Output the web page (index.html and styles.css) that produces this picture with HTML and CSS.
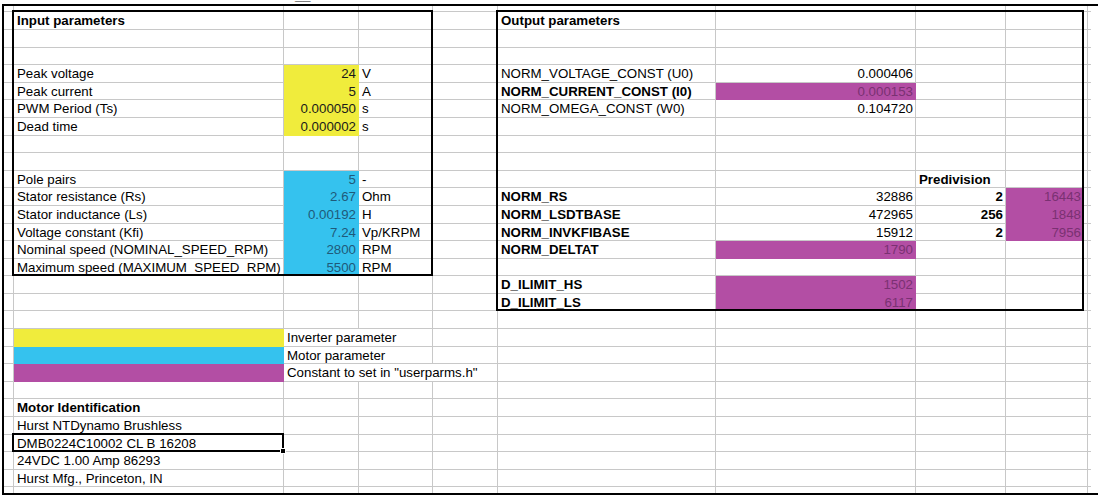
FILE: index.html
```html
<!DOCTYPE html>
<html>
<head>
<meta charset="utf-8">
<title>Motor parameters</title>
<link rel="stylesheet" href="styles.css">
</head>
<body>
<div class="title"><span>__</span></div>
<div class="frame">
  <div class="sheet">
    <i class="row r0"></i><i class="row r1"></i><i class="row r2"></i><i class="row r3"></i>
    <i class="row r4"></i><i class="row r5"></i><i class="row r6"></i><i class="row r7"></i>
    <i class="row r8"></i><i class="row r9"></i><i class="row r10"></i><i class="row r11"></i>
    <i class="row r12"></i><i class="row r13"></i><i class="row r14"></i><i class="row r15"></i>
    <i class="row r16"></i><i class="row r17"></i><i class="row r18"></i><i class="row r19"></i>
    <i class="row r20"></i><i class="row r21"></i><i class="row r22"></i><i class="row r23"></i>
    <i class="row r24"></i><i class="row r25"></i><i class="row r26"></i><i class="row r27"></i>

    <!-- Input parameters -->
    <div class="cell b cB r1">Input parameters</div>

    <div class="cell cB r4">Peak voltage</div>
    <div class="cell num yel cC r4">24</div>
    <div class="cell cD r4">V</div>
    <div class="cell cB r5">Peak current</div>
    <div class="cell num yel cC r5">5</div>
    <div class="cell cD r5">A</div>
    <div class="cell cB r6">PWM Period (Ts)</div>
    <div class="cell num yel cC r6">0.000050</div>
    <div class="cell cD r6">s</div>
    <div class="cell cB r7">Dead time</div>
    <div class="cell num yel cC r7">0.000002</div>
    <div class="cell cD r7">s</div>

    <div class="cell cB r10">Pole pairs</div>
    <div class="cell num cya cC r10">5</div>
    <div class="cell cD r10">-</div>
    <div class="cell cB r11">Stator resistance (Rs)</div>
    <div class="cell num cya cC r11">2.67</div>
    <div class="cell cD r11">Ohm</div>
    <div class="cell cB r12">Stator inductance (Ls)</div>
    <div class="cell num cya cC r12">0.00192</div>
    <div class="cell cD r12">H</div>
    <div class="cell cB r13">Voltage constant (Kfi)</div>
    <div class="cell num cya cC r13">7.24</div>
    <div class="cell cD r13">Vp/KRPM</div>
    <div class="cell cB r14">Nominal speed (NOMINAL_SPEED_RPM)</div>
    <div class="cell num cya cC r14">2800</div>
    <div class="cell cD r14">RPM</div>
    <div class="cell cB r15">Maximum speed (MAXIMUM_SPEED_RPM)</div>
    <div class="cell num cya cC r15">5500</div>
    <div class="cell cD r15">RPM</div>

    <!-- Output parameters -->
    <div class="cell b cF r1">Output parameters</div>

    <div class="cell cF r4">NORM_VOLTAGE_CONST (U0)</div>
    <div class="cell num cG r4">0.000406</div>
    <div class="cell b cF r5">NORM_CURRENT_CONST (I0)</div>
    <div class="cell num mag cG r5">0.000153</div>
    <div class="cell cF r6">NORM_OMEGA_CONST (W0)</div>
    <div class="cell num cG r6">0.104720</div>

    <div class="cell b cH r10">Predivision</div>

    <div class="cell b cF r11">NORM_RS</div>
    <div class="cell num cG r11">32886</div>
    <div class="cell num b cH r11">2</div>
    <div class="cell num mag cI r11">16443</div>
    <div class="cell b cF r12">NORM_LSDTBASE</div>
    <div class="cell num cG r12">472965</div>
    <div class="cell num b cH r12">256</div>
    <div class="cell num mag cI r12">1848</div>
    <div class="cell b cF r13">NORM_INVKFIBASE</div>
    <div class="cell num cG r13">15912</div>
    <div class="cell num b cH r13">2</div>
    <div class="cell num mag cI r13">7956</div>
    <div class="cell b cF r14">NORM_DELTAT</div>
    <div class="cell num mag cG r14">1790</div>

    <div class="cell b cF r16">D_ILIMIT_HS</div>
    <div class="cell num mag cG r16">1502</div>
    <div class="cell b cF r17">D_ILIMIT_LS</div>
    <div class="cell num mag cG r17">6117</div>

    <!-- Legend -->
    <div class="cell yel cB r19"></div>
    <div class="cell ovf cCD r19">Inverter parameter</div>
    <div class="cell cya cB r20"></div>
    <div class="cell ovf cCD r20">Motor parameter</div>
    <div class="cell mag cB r21"></div>
    <div class="cell ovf cCE r21">Constant to set in "userparms.h"</div>

    <!-- Motor identification -->
    <div class="cell b cB r23">Motor Identification</div>
    <div class="cell cB r24">Hurst NTDynamo Brushless</div>
    <div class="cell cB r25">DMB0224C10002 CL B 16208</div>
    <div class="cell cB r26">24VDC 1.00 Amp 86293</div>
    <div class="cell cB r27">Hurst Mfg., Princeton, IN</div>

    <!-- Borders and selection -->
    <div class="box box-in"></div>
    <div class="box box-out"></div>
    <div class="sel"><i class="handle"></i></div>
  </div>
</div>
</body>
</html>
```

FILE: styles.css
```css
* { box-sizing: border-box; }

html, body {
  margin: 0;
  padding: 0;
  background: #fff;
}

body {
  width: 1098px;
  height: 497px;
  overflow: hidden;
  font-family: "Liberation Sans", Arial, sans-serif;
  font-size: 13.3px;
  color: #000;
}

.title {
  height: 4px;
  overflow: hidden;
}

.title span {
  display: block;
  margin: -12px 0 0 295px;
  font: bold 14px/14px "Liberation Sans", Arial, sans-serif;
  color: #111;
}

.frame {
  margin-left: 2px;
  width: 1096px;
  height: 491px;
  border: 2px solid #000;
  border-right: 0;
  overflow: hidden;
}

.sheet {
  display: grid;
  grid-template-columns: 10px 270px 75px 74px 65px 218px 200px 90px 78px 7px 1fr;
  grid-template-rows: 6.4px repeat(27, 17.6px) 1fr;
  height: 487px;
  background:
    linear-gradient(#c8c8c8, #c8c8c8) 9px 0 / 1px 100% no-repeat,
    linear-gradient(#c8c8c8, #c8c8c8) 279px 0 / 1px 100% no-repeat,
    linear-gradient(#c8c8c8, #c8c8c8) 354px 0 / 1px 100% no-repeat,
    linear-gradient(#c8c8c8, #c8c8c8) 428px 0 / 1px 100% no-repeat,
    linear-gradient(#c8c8c8, #c8c8c8) 493px 0 / 1px 100% no-repeat,
    linear-gradient(#c8c8c8, #c8c8c8) 711px 0 / 1px 100% no-repeat,
    linear-gradient(#c8c8c8, #c8c8c8) 911px 0 / 1px 100% no-repeat,
    linear-gradient(#c8c8c8, #c8c8c8) 1001px 0 / 1px 100% no-repeat,
    linear-gradient(#c8c8c8, #c8c8c8) 1083px 0 / 1px 100% no-repeat,
    #fff;
}

/* horizontal gridlines */
.row {
  display: block;
  grid-column: 1 / 11;
  border-bottom: 1px solid #c8c8c8;
}

/* grid rows (sheet row N sits on grid line N+1) */
.r0 { grid-row: 1; }
.r1 { grid-row: 2; }
.r2 { grid-row: 3; }
.r3 { grid-row: 4; }
.r4 { grid-row: 5; }
.r5 { grid-row: 6; }
.r6 { grid-row: 7; }
.r7 { grid-row: 8; }
.r8 { grid-row: 9; }
.r9 { grid-row: 10; }
.r10 { grid-row: 11; }
.r11 { grid-row: 12; }
.r12 { grid-row: 13; }
.r13 { grid-row: 14; }
.r14 { grid-row: 15; }
.r15 { grid-row: 16; }
.r16 { grid-row: 17; }
.r17 { grid-row: 18; }
.r18 { grid-row: 19; }
.r19 { grid-row: 20; }
.r20 { grid-row: 21; }
.r21 { grid-row: 22; }
.r22 { grid-row: 23; }
.r23 { grid-row: 24; }
.r24 { grid-row: 25; }
.r25 { grid-row: 26; }
.r26 { grid-row: 27; }
.r27 { grid-row: 28; }

/* columns */
.cA { grid-column: 1; }
.cB { grid-column: 2; }
.cC { grid-column: 3; }
.cD { grid-column: 4; }
.cE { grid-column: 5; }
.cF { grid-column: 6; }
.cG { grid-column: 7; }
.cH { grid-column: 8; }
.cI { grid-column: 9; }
.cCD { grid-column: 3 / 5; }
.cCE { grid-column: 3 / 6; }

.cell {
  padding: 0 3px;
  line-height: 17px;
  white-space: nowrap;
  overflow: visible;
  min-width: 0;
}

.num {
  text-align: right;
  padding-right: 3px;
}

.b { font-weight: bold; }

.yel { background: #f0ec3c; color: #1a1a1a; }
.cya { background: #35c2ee; color: #1f5a7a; }
.mag { background: #b34ea4; color: #7a3172; }

/* text overflowing into empty neighbours hides their gridlines */
.ovf {
  background: #fff;
  border-right: 1px solid #c8c8c8;
  border-bottom: 1px solid #c8c8c8;
}

.box {
  border: 2px solid #000;
  margin: -2px 0 0 -2px;
  z-index: 3;
}

.box-in {
  grid-column: 2 / 5;
  grid-row: 2 / 17;
}

.box-out {
  grid-column: 6 / 10;
  grid-row: 2 / 19;
}

.sel {
  grid-column: 2;
  grid-row: 26;
  border: 2px solid #000;
  margin: -2px 0 0 -2px;
  position: relative;
  z-index: 4;
}

.handle {
  position: absolute;
  right: -4px;
  bottom: -4px;
  width: 6px;
  height: 6px;
  background: #000;
  border: 1px solid #fff;
}
```
